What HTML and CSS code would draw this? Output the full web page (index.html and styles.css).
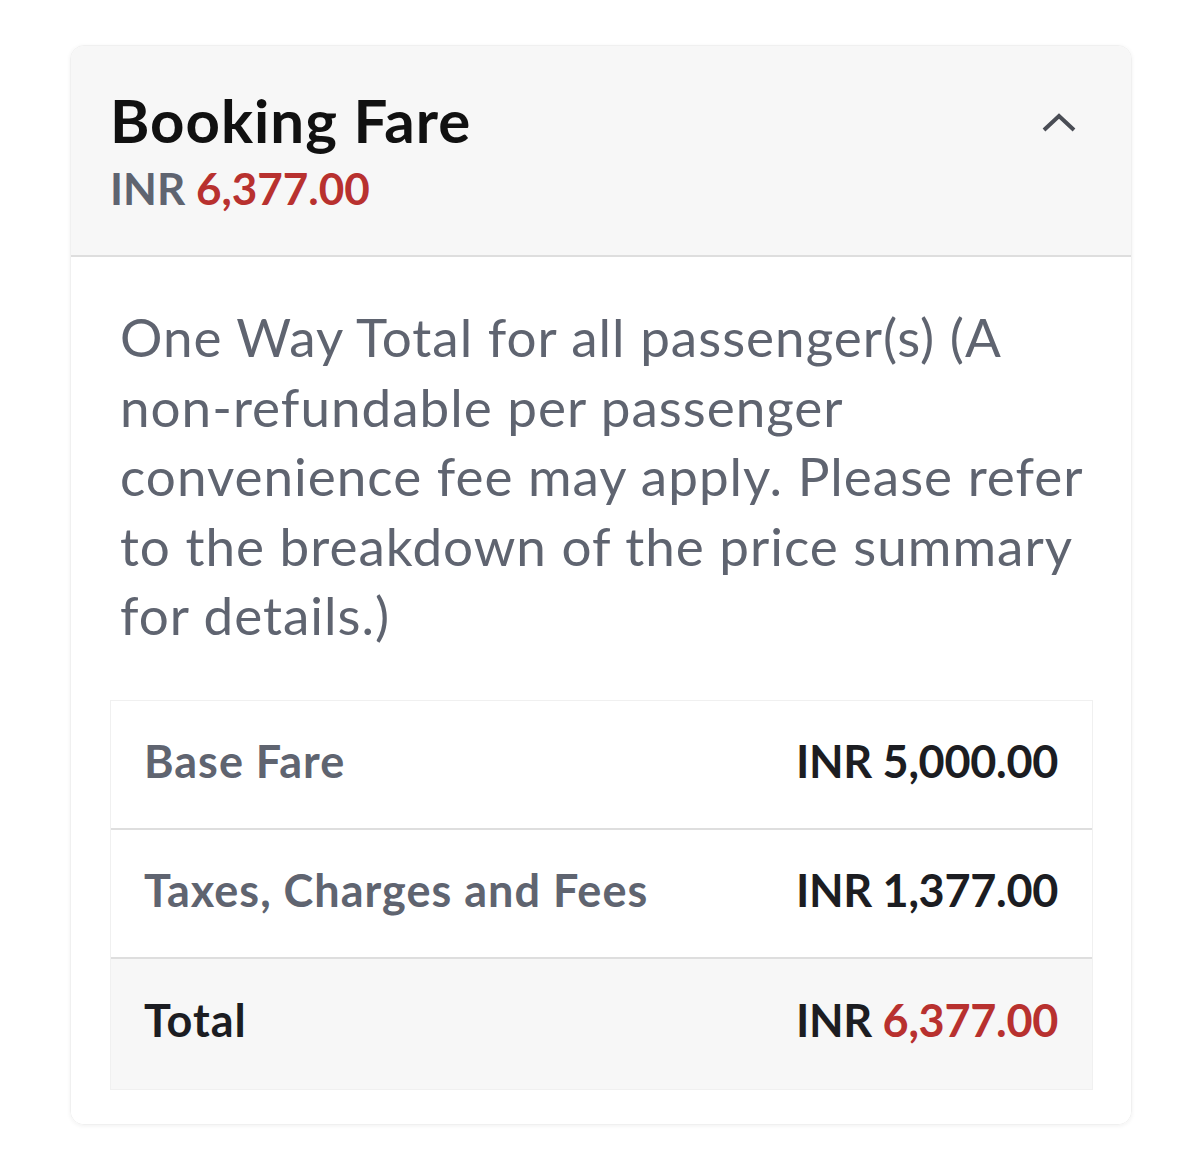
FILE: index.html
```html
<!DOCTYPE html>
<html lang="en">
<head>
    <meta charset="UTF-8">
    <title>Booking Fare</title>
    <link rel="stylesheet" href="styles.css">
</head>
<body>
    <div class="tarjeta">
        <div class="cabecera">
            <div>
                <h1>Booking Fare</h1>
                <div class="precio">INR <span class="rojo">6,377.00</span></div>
            </div>
            <svg class="flecha" width="36" height="24" viewBox="0 0 36 24">
                <polyline points="3,20 18,6 33,20" fill="none" stroke="#4a4d55" stroke-width="4"/>
            </svg>
        </div>

        <div class="cuerpo">
            <p class="nota">One Way Total for all passenger(s) (A<br>
                non-refundable per passenger<br>
                convenience fee may apply. Please refer<br>
                to the breakdown of the price summary<br>
                for details.)</p>

            <div class="tabla">
                <div class="fila">
                    <span class="etiqueta">Base Fare</span>
                    <span class="valor">INR 5,000.00</span>
                </div>
                <div class="fila">
                    <span class="etiqueta">Taxes, Charges and Fees</span>
                    <span class="valor">INR 1,377.00</span>
                </div>
                <div class="fila total">
                    <span class="etiqueta">Total</span>
                    <span class="valor">INR <span class="rojo">6,377.00</span></span>
                </div>
            </div>
        </div>
    </div>
</body>
</html>
```

FILE: styles.css
```css
body {
    margin: 0;
    background: #fff;
    font-family: "Lato", "Open Sans", sans-serif;
}
.tarjeta {
    width: 1060px;
    margin: 45px 70px;
    border-radius: 14px;
    border: 1px solid #f0f0f0;
    box-shadow: 0 1px 4px rgba(0, 0, 0, 0.06);
    overflow: hidden;
}
.cabecera {
    background: #f7f7f7;
    border-bottom: 2px solid #dedede;
    padding: 34px 54px 41px 39px;
    display: flex;
    justify-content: space-between;
    align-items: flex-start;
}
h1 {
    margin: 0;
    font-size: 60px;
    line-height: 80px;
    font-weight: 700;
    letter-spacing: 1px;
    color: #111;
}
.precio {
    margin-top: 2px;
    font-size: 44px;
    line-height: 52px;
    font-weight: 700;
    color: #5f6470;
}
.rojo {
    color: #b8312f;
}
.flecha {
    margin-top: 30px;
}
.cuerpo {
    background: #fff;
    padding: 45px 38px 34px 39px;
}
.nota {
    margin: 0 -20px 50px 10px;
    font-size: 53px;
    line-height: 69.5px;
    letter-spacing: 1px;
    white-space: nowrap;
    color: #5f6470;
}
.tabla {
    border: 1px solid #f0f0f0;
}
.fila {
    display: flex;
    justify-content: space-between;
    align-items: center;
    box-sizing: border-box;
    height: 129px;
    padding: 0 34px 7px 33px;
    border-bottom: 2px solid #dedede;
    font-size: 45px;
    font-weight: 700;
}
.fila:last-child {
    border-bottom: none;
    height: 130px;
}
.etiqueta {
    color: #5f6470;
    letter-spacing: 1px;
}
.valor {
    color: #1c1d22;
    letter-spacing: -0.3px;
}
.total {
    background: #f7f7f7;
}
.total .etiqueta {
    color: #1c1d22;
}
```
